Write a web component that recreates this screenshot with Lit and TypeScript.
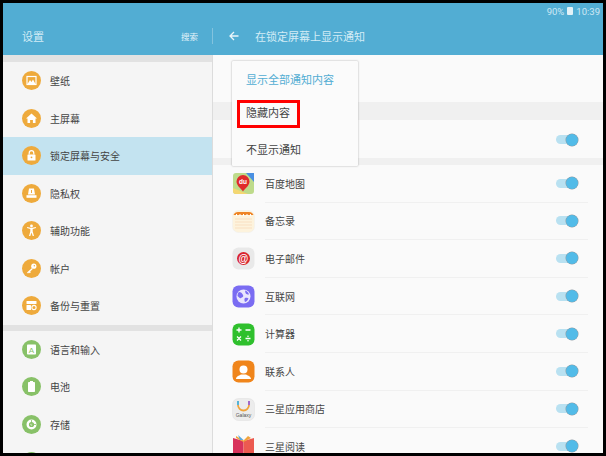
import { LitElement, html, css, svg } from "lit";
import { customElement } from "lit/decorators.js";

const O = "#eeaa3c";
const G = "#88c168";
const glyph = (c: any) => html`<svg viewBox="0 0 19 19" width="19" height="19">${c}</svg>`;
const side: any[] = [
  { t: "壁纸", c: O, g: svg`<rect x="5" y="5.5" width="9" height="8" fill="none" stroke="#fff" stroke-width="1.2"/><path d="M5.5 13l2.5-4 1.5 2 1.5-2.5 2.5 4.5z" fill="#fff"/>` },
  { t: "主屏幕", c: O, g: svg`<path d="M9.5 4.5L15 9.5h-1.5V14h-2.6v-3H8.1v3H5.5V9.5H4z" fill="#fff"/>` },
  { t: "锁定屏幕与安全", c: O, sel: true, g: svg`<rect x="5.5" y="8.5" width="8" height="6" rx=".6" fill="#fff"/><path d="M7.2 8.5V7a2.3 2.3 0 0 1 4.6 0v1.5" fill="none" stroke="#fff" stroke-width="1.2"/><circle cx="9.5" cy="11.3" r=".9" fill="${O}"/>` },
  { t: "隐私权", c: O, g: svg`<path d="M7 4.5h5l1 6H6z" fill="#fff"/><rect x="4.5" y="11.2" width="10" height="2.6" fill="#fff"/><rect x="9" y="6" width="1" height="3" fill="${O}"/>` },
  { t: "辅助功能", c: O, g: svg`<circle cx="9.5" cy="5" r="1.4" fill="#fff"/><path d="M5 7l3.3.9v2.6L7 15h1.3l1.2-3.4 1.2 3.4H12l-1.3-4.500V7.900L14 7l-.2-.9-4.300 1-4.300-1z" fill="#fff"/>` },
  { t: "帐户", c: O, g: svg`<circle cx="11.800" cy="7.200" r="2.600" fill="#fff"/><path d="M10 9L5 13.500l1 1 1-1 .8.800 1-1-.6-.8 2.400-2.300z" fill="#fff"/><circle cx="12.300" cy="6.700" r=".7" fill="${O}"/>` },
  { t: "备份与重置", c: O, g: svg`<rect x="4.500" y="5" width="10" height="3" rx=".5" fill="#fff"/><rect x="4.500" y="9" width="4.500" height="5" rx=".5" fill="#fff"/><circle cx="12" cy="11.500" r="2.100" fill="none" stroke="#fff" stroke-width="1.100"/>` },
];
const side2: any[] = [
  { t: "语言和输入", c: G, g: svg`<rect x="5" y="4.500" width="9" height="10" rx=".8" fill="#fff"/><text x="9.500" y="12.500" font-size="8" text-anchor="middle" fill="${G}" font-family="Liberation Sans">A</text>` },
  { t: "电池", c: G, g: svg`<rect x="6" y="5" width="7" height="10" rx=".8" fill="#fff"/><rect x="8" y="4" width="3" height="1.200" fill="#fff"/>` },
  { t: "存储", c: G, g: svg`<circle cx="9.500" cy="9.500" r="3.800" fill="none" stroke="#fff" stroke-width="2.400"/><circle cx="9.500" cy="9.500" r="1" fill="#fff"/><path d="M9.500 5v4.500H14" fill="none" stroke="${G}" stroke-width=".8"/>` },
  { t: "", c: G, g: svg`` },
];

const toggle = html`<span class="tg"><i></i><b></b></span>`;
const apps: any[] = [
  { t: "百度地图", g: svg`<rect x="1" y="1" width="21" height="21" rx="3" fill="#bedb8b"/><path d="M22 1v9L14 1z" fill="#4a90e2"/><path d="M1 16L16 22H4a3 3 0 0 1-3-3z" fill="#f4d772"/><path d="M11 3a6.500 6.500 0 0 1 6.500 6.500c0 4-4.500 7-6.500 10-2-3-6.500-6-6.500-10A6.500 6.500 0 0 1 11 3z" fill="#e02b2b"/><text x="11" y="12" font-size="6.500" font-weight="700" text-anchor="middle" fill="#fff" font-family="Liberation Sans">du</text>` },
  { t: "备忘录", g: svg`<rect x=".5" y=".5" width="22" height="22" rx="6" fill="#fdf3dd" stroke="#eee" stroke-width=".5"/><path d="M1.500 5a5 5 0 0 1 4.500-3h11a5 5 0 0 1 4.500 3z" fill="#ee8426"/><path d="M3 9h17M3 12h17M3 15h17M3 18h17" stroke="#f6d7b4" stroke-width=".7"/><path d="M4.500 4v2M8 4v2M11.500 4v2M15 4v2M18.500 4v2" stroke="#fff" stroke-width="1"/>` },
  { t: "电子邮件", g: svg`<rect x=".5" y=".5" width="22" height="22" rx="6" fill="#e9e9e9"/><circle cx="11.500" cy="11.500" r="6.500" fill="#d9252e"/><text x="11.500" y="15" font-size="10" font-weight="700" text-anchor="middle" fill="#fff" font-family="Liberation Sans">@</text>` },
  { t: "互联网", g: svg`<rect x=".5" y=".5" width="22" height="22" rx="6" fill="#7a6cf2"/><circle cx="11.500" cy="11.500" r="7" fill="#e9e6fd"/><path d="M7 7c2 0 3 1 4 3s-1 2-2 3-2-1-3.500-2C5.500 9 6 8 7 7zM13 5.500c2 .5 3.500 2 4 4-1.500 0-3-.5-3.500-1.500zM13 13c1.500-.5 3 0 3.500.5-.5 1.500-2 3-3.500 3.500-.5-1.500-1-3 0-4z" fill="#7a6cf2"/>` },
  { t: "计算器", g: svg`<rect x=".5" y=".5" width="22" height="22" rx="6" fill="#2fc02d"/><path d="M4.500 7h5M7 4.500v5M13.500 7h5M5 13.500l4 4M9 13.500l-4 4M13.500 15.500h5" stroke="#fff" stroke-width="1.300"/><circle cx="16" cy="13.300" r=".8" fill="#fff"/><circle cx="16" cy="17.700" r=".8" fill="#fff"/>` },
  { t: "联系人", g: svg`<rect x=".5" y=".5" width="22" height="22" rx="6" fill="#f0851b"/><circle cx="11.500" cy="9.500" r="4" fill="#fff"/><path d="M4 19c0-3 4-3.500 5-4.500h5c1 1 5 1.500 5 4.500z" fill="#fff"/>` },
  { t: "三星应用商店", g: svg`<rect x=".5" y=".5" width="22" height="22" rx="6" fill="#ececec" stroke="#dedede" stroke-width=".5"/><path d="M6 3v4a5.500 5.500 0 0 0 11 0V3" fill="none" stroke="#f0a43a" stroke-width="1.800"/><path d="M6 3v4" stroke="#43b5e8" stroke-width="1.800"/><path d="M17 3v4" stroke="#9a63d8" stroke-width="1.800"/><text x="11.500" y="18.500" font-size="5" text-anchor="middle" fill="#555" font-family="Liberation Sans">Galaxy</text>` },
  { t: "三星阅读", g: svg`<path d="M1 3l10.500 3v17H1z" fill="#d8335c"/><path d="M22 3l-10.500 3v17H22z" fill="#ec5a50"/><path d="M4 1l7.500 4.500L16 1l3 2-7.500 4L4 3z" fill="#f1a33a"/><path d="M6 0l5.500 5L8 5z" fill="#58a9de"/>` },
];

@customElement("app-root")
export class AppRoot extends LitElement {
  static styles = css`
    :host {
      display: block; width: 606px; height: 456px; box-sizing: border-box;
      background: #000; padding: 3px 3px 3px 3px; overflow: hidden;
      font-family: "Roboto", "Noto Sans CJK SC", sans-serif; color: #444;
    }
    .screen { width: 600px; height: 450px; display: flex; flex-direction: column; overflow: hidden; position: relative; background: #fafafa; }
    .head { height: 52px; flex: none; background: #52add3; display: flex; flex-direction: column; color: #d3ecf6; }
    .status { height: 16px; display: flex; justify-content: flex-end; align-items: center; gap: 2px; padding: 0 3px 0 0; font-size: 9.500px; color: #cfe8f3; }
    .batt { width: 6px; height: 8px; background: #e3f2f8; border-radius: 1px; margin: 0 1px; }
    .bar { flex: 1; display: flex; align-items: center; padding-bottom: 3px; }
    .bar-l { width: 210px; box-sizing: border-box; padding-left: 19px; display: flex; align-items: center; font-size: 11px; }
    .bar-l span:first-child { flex: 1; }
    .search { font-size: 8.500px; color: #e5f3f9; width: 31px; }
    .sep { width: 1px; height: 16px; background: #83c3de; }
    .bar-r { display: flex; align-items: center; padding-left: 16px; font-size: 11px; }
    .bar-r svg { margin-right: 16px; display: block; }
    .body { flex: 1; display: flex; min-height: 0; }
    .side { width: 210px; flex: none; box-sizing: border-box; background: #f5f5f5; border-right: 1px solid #dcdcdc; overflow: hidden; }
    .strip { height: 7px; background: #e2e2e2; }
    .strip.mid { height: 6px; }
    .srow { height: 37.500px; display: flex; align-items: center; padding-left: 19px; font-size: 10px; gap: 9px; }
    .srow.sel { background: #c3e3f0; }
    .dot { width: 19px; height: 19px; border-radius: 50%; flex: none; display: block; }
    .dot svg { display: block; }
    .main { flex: 1; min-width: 0; overflow: hidden; }
    .gap1 { height: 47px; }
    .band { background: #f0f0f0; height: 18px; }
    .band.b2 { height: 7px; }
    .row0 { height: 38px; box-sizing: border-box; display: flex; justify-content: flex-end; align-items: center; padding: 1px 25px 0 0; }
    .row { height: 37.600px; display: flex; align-items: center; padding-left: 19px; font-size: 10px; }
    .ico { width: 23px; height: 23px; flex: none; margin-right: 10px; }
    .ico svg { display: block; }
    .rc { flex: 1; height: 100%; display: flex; align-items: center; justify-content: space-between; border-bottom: 1px solid #f0f0f0; box-sizing: border-box; margin-right: 15px; padding-right: 10px; }
    .tg { position: relative; width: 22px; height: 12px; display: block; }
    .tg i { position: absolute; left: 0; top: 1.500px; width: 20px; height: 9px; border-radius: 5px; background: #b9e1f1; }
    .tg b { position: absolute; right: 0; top: 0; width: 12px; height: 12px; border-radius: 50%; background: #52bbe8; box-shadow: 0 0 0 .5px #8e9ba3; }
    .menu { position: absolute; left: 229px; top: 58px; width: 126px; height: 105px; background: #fbfbfb; box-shadow: 0 0 2px rgba(0,0,0,.35); border-radius: 1px; display: flex; flex-direction: column; font-size: 11px; box-sizing: border-box; padding-left: 5px; }
    .mi { height: 35px; flex: none; display: flex; align-items: center; }
    .mi.on { color: #52add3; }
    .mi span { padding-left: 9px; }
    .mi.box span { border: 3px solid #f00; padding: 4px 7px 4px 6px; line-height: 14px; width: 44px; white-space: nowrap; }
  `;

  render() {
    const srow = (s: any) => html`<div class="srow ${s.sel ? "sel" : ""}">
      <span class="dot" style="background:${s.c}">${glyph(s.g)}</span><span>${s.t}</span></div>`;
    return html`<div class="screen">
      <div class="head">
        <div class="status"><span>90%</span><span class="batt"></span><span>10:39</span></div>
        <div class="bar">
          <div class="bar-l"><span>设置</span><span class="search">搜索</span><span class="sep"></span></div>
          <div class="bar-r">
            <svg width="10" height="10" viewBox="0 0 10 10"><path d="M9.500 5H1M5 1L1 5l4 4" fill="none" stroke="#eaf5fa" stroke-width="1.300"/></svg>
            <span>在锁定屏幕上显示通知</span>
          </div>
        </div>
      </div>
      <div class="body">
        <div class="side">
          <div class="strip"></div>
          ${side.map(srow)}
          <div class="strip mid"></div>
          ${side2.map(srow)}
        </div>
        <div class="main">
          <div class="gap1"></div>
          <div class="band"></div>
          <div class="row0">${toggle}</div>
          <div class="band b2"></div>
          ${apps.map((a) => html`<div class="row">
            <span class="ico"><svg viewBox="0 0 23 23" width="23" height="23">${a.g}</svg></span>
            <div class="rc"><span>${a.t}</span>${toggle}</div>
          </div>`)}
        </div>
      </div>
      <div class="menu">
        <div class="mi on"><span>显示全部通知内容</span></div>
        <div class="mi box"><span>隐藏内容</span></div>
        <div class="mi"><span>不显示通知</span></div>
      </div>
    </div>`;
  }
}
